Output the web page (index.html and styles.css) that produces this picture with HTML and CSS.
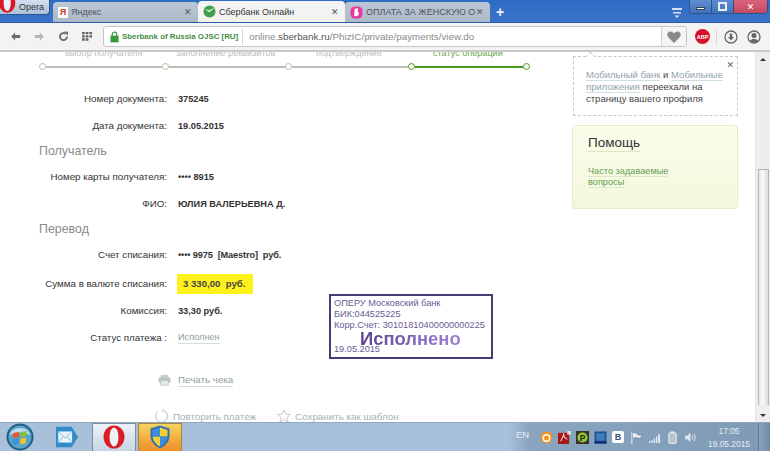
FILE: index.html
```html
<!DOCTYPE html>
<html lang="ru">
<head>
<meta charset="utf-8">
<title>Сбербанк Онлайн</title>
<link rel="stylesheet" href="styles.css">
</head>
<body>
<header class="tabbar">
  <div class="opera-btn">
    <svg class="opera-logo" viewBox="0 0 20 14"><ellipse cx="8" cy="3" rx="9" ry="11" fill="#d81a22"/><ellipse cx="8" cy="3" rx="4" ry="9" fill="#eef"/></svg>
    <span>Opera</span>
  </div>
  <div class="tab tab-off tab-ya">
    <span class="ya-icon">Я</span><span class="tab-title">Яндекс</span><span class="tab-x">✕</span>
  </div>
  <div class="tab tab-on">
    <svg class="fav" viewBox="0 0 14 14"><circle cx="7" cy="7" r="6.500" fill="#3f9f4a"/><path d="M2 4.500 L7 8 L13 2.500 L7 5.500 Z" fill="#c9e8c0"/></svg>
    <span class="tab-title">Сбербанк Онлайн</span><span class="tab-x">✕</span>
  </div>
  <div class="tab tab-off tab-last">
    <svg class="fav" viewBox="0 0 14 14"><rect x="0.500" y="0.500" width="13" height="13" rx="5" fill="#e8389c"/><path d="M5 3 L8 2.500 Q9.500 3 8 6 Q10.500 7 9 10 Q7 12 4.500 10.500 Z" fill="#fff"/></svg>
    <span class="tab-title">ОПЛАТА ЗА ЖЕНСКУЮ О</span><span class="tab-x">✕</span>
  </div>
  <span class="newtab">+</span>
  <svg class="tabmenu" viewBox="0 0 12 12"><path d="M1 1h10v2H1zM2 5h8v1.500H2zM3.500 8.500h5L6 11z" fill="#d5e2f4"/></svg>
  <div class="winbtns">
    <span class="wb"><i class="wb-min"></i></span>
    <span class="wb"><i class="wb-max"></i></span>
    <span class="wb wb-close">✕</span>
  </div>
</header>

<nav class="toolbar">
  <svg class="navico" viewBox="0 0 14 12"><path d="M6.500 1 L1.500 6 L6.500 11 V7.800 H13 V4.200 H6.500 Z" fill="#6d6d6d"/></svg>
  <svg class="navico" viewBox="0 0 14 12"><path d="M7.500 1 L12.500 6 L7.500 11 V7.800 H1 V4.200 H7.500 Z" fill="#b6b6b6"/></svg>
  <svg class="navico" viewBox="0 0 14 14"><path d="M11.500 7 A4.500 4.500 0 1 1 9.800 3.500" fill="none" stroke="#6d6d6d" stroke-width="2.400"/><path d="M8 0.500 L13 1 L12.500 6 Z" fill="#6d6d6d"/></svg>
  <svg class="navico grid-ico" viewBox="0 0 12 10"><path d="M0 0h3v2.500H0zM4 0h3v2.500H4zM8 0h3v2.500H8zM0 3.500h3v2.500H0zM4 3.500h3v2.500H4zM8 3.500h3v2.500H8zM0 7h3v2.500H0zM4 7h3v2.500H4z" fill="#666"/></svg>
  <div class="address">
    <svg class="lock" viewBox="0 0 10 12"><rect x="0.500" y="4.500" width="9" height="7.500" fill="#3a9a3e"/><path d="M2.500 5V3a2.500 2.500 0 0 1 5 0V5" fill="none" stroke="#3a9a3e" stroke-width="1.300"/></svg>
    <span class="cert">Sberbank of Russia OJSC [RU]</span>
    <span class="url"><span class="url-sub">online.</span><span class="url-dom">sberbank.ru</span><span class="url-sub">/PhizIC/private/payments/view.do</span></span>
    <span class="heart-box"><svg class="heart" viewBox="0 0 14 12"><path d="M7 12 L1 6 Q-1 2 2.500 0.500 Q5.500 0 7 2.500 Q8.500 0 11.500 0.500 Q15 2 13 6 Z" fill="#8a8a8a"/></svg></span>
  </div>
  <span class="abp">ABP</span>
  <span class="tool-sep"></span>
  <svg class="tool-ico" viewBox="0 0 14 14"><circle cx="7" cy="7" r="6" fill="none" stroke="#666" stroke-width="1.300"/><path d="M5.800 3.500h2.400V7h1.800L7 10.500 4 7h1.800z" fill="#666"/></svg>
  <svg class="tool-ico" viewBox="0 0 14 14"><circle cx="7" cy="7" r="6" fill="none" stroke="#666" stroke-width="1.300"/><circle cx="7" cy="5.500" r="2.500" fill="#666"/><path d="M2.800 11 Q7 6.500 11.200 11 Q7 14 2.800 11z" fill="#666"/></svg>
</nav>

<div class="viewport">
  <main class="page">
    <div class="content">
      <div class="steps">
        <div class="step-labels">
          <span class="sl sl-1">выбор получателя</span>
          <span class="sl sl-2">заполнение реквизитов</span>
          <span class="sl sl-3">подтверждение</span>
          <span class="sl sl-4">статус операции</span>
        </div>
        <div class="step-line">
          <i class="dot"></i><i class="seg"></i><i class="dot"></i><i class="seg"></i><i class="dot"></i><i class="seg"></i><i class="dot dot-on"></i><i class="seg seg-on"></i><i class="dot dot-on"></i>
        </div>
      </div>

      <div class="row row-first"><span class="label">Номер документа:</span><b class="val">375245</b></div>
      <div class="row"><span class="label">Дата документа:</span><b class="val">19.05.2015</b></div>
      <h2 class="sec">Получатель</h2>
      <div class="row"><span class="label">Номер карты получателя:</span><b class="val">•••• 8915</b></div>
      <div class="row"><span class="label">ФИО:</span><b class="val">ЮЛИЯ ВАЛЕРЬЕВНА Д.</b></div>
      <h2 class="sec">Перевод</h2>
      <div class="row"><span class="label">Счет списания:</span><b class="val val-acct">•••• 9975&nbsp; [Maestro]&nbsp; руб.</b></div>
      <div class="row row-sum"><span class="label">Сумма в валюте списания:</span><b class="val val-sum">3 330,00&nbsp; руб.</b></div>
      <div class="row"><span class="label">Комиссия:</span><b class="val">33,30 руб.</b></div>
      <div class="row"><span class="label">Статус платежа :</span><a class="val link">Исполнен</a></div>

      <div class="print">
        <svg class="print-ico" viewBox="0 0 14 12"><rect x="3" y="0.500" width="8" height="3" fill="#c4d0cf"/><rect x="0.500" y="3" width="13" height="6" rx="2" fill="#b5c4c3"/><rect x="3" y="6.500" width="8" height="5" fill="#e4ebea" stroke="#b5c4c3" stroke-width=".8"/></svg>
        <a class="link print-link">Печать чека</a>
      </div>
      <div class="actions">
        <span class="action act-repeat">
          <svg class="act-ico" viewBox="0 0 14 14"><path d="M8.500 1.500 A6 6 0 1 1 3 2.500" fill="none" stroke="#bdbdbd" stroke-width="1"/><path d="M6.500 0 L9 1.500 L7 3" fill="none" stroke="#bdbdbd" stroke-width=".8"/></svg>
          <span>Повторить платеж</span>
        </span>
        <span class="action">
          <svg class="act-ico" viewBox="0 0 14 14"><path d="M7 .8 L8.800 5.200 L13.500 5.500 L9.900 8.500 L11 13.200 L7 10.600 L3 13.200 L4.100 8.500 L.5 5.500 L5.200 5.200 Z" fill="none" stroke="#c4c4c4" stroke-width=".9"/></svg>
          <span>Сохранить как шаблон</span>
        </span>
      </div>

      <div class="stamp">
        <div>ОПЕРУ Московский банк</div>
        <div>БИК:044525225</div>
        <div>Корр.Счет: 30101810400000000225</div>
        <div class="stamp-big"><span>Исполнено</span></div>
        <div class="stamp-date">19.05.2015</div>
      </div>
    </div>

    <aside class="side">
      <div class="notice">
        <span class="notice-x">✕</span>
        <a class="nlink">Мобильный банк</a> и <a class="nlink">Мобильные приложения</a> переехали на страницу вашего профиля
      </div>
      <div class="help">
        <div class="help-title"><span>Помощь</span></div>
        <a class="help-link"><span>Часто задаваемые</span><br><span>вопросы</span></a>
      </div>
    </aside>
  </main>
  <div class="scrollbar">
    <span class="sb-up"></span>
    <span class="sb-thumb"></span>
    <span class="sb-down"></span>
  </div>
</div>

<footer class="taskbar">
  <div class="orb">
    <svg viewBox="0 0 28 28"><circle cx="14" cy="14" r="13.500" fill="#1f5f86"/><circle cx="14" cy="14" r="11.500" fill="#5aa3c8"/><path d="M3.500 12 A11 10 0 0 1 24.500 12 Q14 7 3.500 12Z" fill="#bcdcec"/><path d="M7 10 L13 9 L13 14 L7 15Z" fill="#e8562a"/><path d="M14.500 9 L21 8 L20 13.500 L14.500 14Z" fill="#8ac43f"/><path d="M7 16 L13 15.500 L12.500 21 L6.500 21.500Z" fill="#3b92d8"/><path d="M14.500 15.500 L20 15 L19.500 20.500 L14 21Z" fill="#f5c52e"/></svg>
  </div>
  <div class="task task-mail">
    <svg viewBox="0 0 26 24"><path d="M1 1H18L25 12L18 23H1Z" fill="#2f8cc8"/><rect x="3.500" y="6" width="15" height="12" fill="#eaf4fb"/><path d="M3.500 6 L11 13 L18.500 6 M3.500 18 L9 11.500 M18.500 18 L13 11.500" fill="none" stroke="#7db8de" stroke-width="1"/></svg>
  </div>
  <div class="task task-opera">
    <svg viewBox="0 0 22 24"><ellipse cx="11" cy="12" rx="10.500" ry="11.500" fill="#d81d24"/><ellipse cx="11" cy="12" rx="4.500" ry="9.500" fill="#eef1f5"/></svg>
  </div>
  <div class="task task-shield">
    <svg viewBox="0 0 20 24"><path d="M10 .5 L19.500 3.500 V12 Q19 19 10 23.500 Q1 19 .5 12 V3.500Z" fill="#2f6fb5"/><path d="M10 2.500 L17.500 5 V11.500 H10Z" fill="#f6cf39"/><path d="M10 11.500 H2.500 Q3.500 18 10 21.500Z" fill="#f6cf39"/><path d="M10 2.500 L2.500 5 V11.500 H10Z" fill="#3f8fd8"/><path d="M10 11.500 H17.500 Q16.500 18 10 21.500Z" fill="#3f8fd8"/></svg>
  </div>
  <div class="tray">
    <span class="lang">EN</span>
    <svg class="tray-ico" viewBox="0 0 14 14"><circle cx="7" cy="7" r="6.500" fill="#f09320"/><circle cx="7" cy="7.500" r="3.500" fill="none" stroke="#fff" stroke-width="1.600"/></svg>
    <svg class="tray-ico" viewBox="0 0 14 14"><rect y="2" width="12" height="12" fill="#a81818"/><path d="M3 11 Q7 3 6 3 Q5 7 10 9" fill="none" stroke="#fff" stroke-width="1"/><rect x="10" y="0" width="4" height="4" fill="#f3d9c9"/></svg>
    <svg class="tray-ico" viewBox="0 0 14 14"><rect width="14" height="14" fill="#3b3326"/><circle cx="7" cy="7" r="5.500" fill="#8fc832"/><text x="7" y="10.500" font-size="9" font-weight="700" text-anchor="middle" fill="#222" font-family="Liberation Sans">P</text></svg>
    <svg class="tray-ico" viewBox="0 0 14 14"><rect x=".5" y=".5" width="13" height="13" fill="#20558f"/><rect x="2.500" y="2.500" width="9" height="8" fill="#3f7dbe"/><rect x=".5" y="11" width="13" height="2.500" fill="#0e2c7c"/></svg>
    <span class="tray-vk">В</span>
    <svg class="tray-ico" viewBox="0 0 14 14"><path d="M2 1V14" stroke="#e8eef4" stroke-width="1.200"/><path d="M2.500 1.500 L8 2.500 L8 4 L13 4.500 L11 8 L6 7 L2.500 8Z" fill="#e8eef4" stroke="#51657a" stroke-width=".5"/></svg>
    <svg class="tray-ico" viewBox="0 0 14 14"><path d="M1 11h1.500v2H1zM3.500 10H5v3H3.500zM6 8h1.500v5H6zM8.500 6H10v7H8.500zM11 3.500h2V13h-2z" fill="#e4ebf2"/></svg>
    <svg class="tray-ico" viewBox="0 0 14 14"><rect x="3" y="2" width="8" height="11.500" rx="1.500" fill="#b8c4cf" stroke="#f0f4f8" stroke-width="1"/><rect x="5" y=".5" width="4" height="1.500" fill="#f0f4f8"/></svg>
    <svg class="tray-ico" viewBox="0 0 14 14"><path d="M1 5h2.500L7 2v10L3.500 9H1z" fill="#dfe6ee"/><path d="M9 4.500 Q10.500 7 9 9.500 M11 3 Q13.500 7 11 11" fill="none" stroke="#dfe6ee" stroke-width="1"/></svg>
    <div class="clock"><div>17:05</div><div>19.05.2015</div></div>
    <span class="showdesk"></span>
  </div>
</footer>
</body>
</html>
```
FILE: styles.css
```css
* { box-sizing: border-box; }
html, body { margin: 0; height: 100%; }
body {
  width: 770px; height: 451px; overflow: hidden;
  display: flex; flex-direction: column;
  font-family: "Liberation Sans", Arial, sans-serif;
  background: #fff; color: #333;
}
a { cursor: pointer; }

/* tab strip */
.tabbar {
  height: 23px; flex: none; display: flex; align-items: flex-end;
  background: linear-gradient(#2f6cc4, #3a74c8);
  border-bottom: 1px solid #2a5ca8;
  position: relative;
}
.opera-btn {
  position: absolute; left: 0; top: 0; width: 50px; height: 15px;
  background: linear-gradient(#d3dff0, #aebfd8);
  border: 1px solid #2c5490; border-top: 0; border-left: 0;
  border-radius: 0 0 4px 0; overflow: hidden;
  font-size: 9px; color: #333;
  display: flex; align-items: center; padding-left: 19px;
}
.opera-logo { position: absolute; left: 0; top: 0; width: 18px; height: 13px; }
.tab {
  height: 20px; display: flex; align-items: center; font-size: 9px;
  border-radius: 4px 4px 0 0; padding-left: 5px; flex: none;
}
.tab-off { background: linear-gradient(#bcc7d6, #aeb9c8); color: #4a5360; }
.tab-ya { margin-left: 53px; width: 145px; }
.tab-on { background: #f3f3f3; color: #333; width: 147px; height: 21px; }
.tab-last { width: 145px; }
.tab-title { flex: 1; white-space: nowrap; overflow: hidden; padding-left: 3px; }
.tab-x { width: 14px; font-size: 9px; color: #555; flex: none; font-weight: 700; font-family: "DejaVu Sans", sans-serif; }
.fav { width: 13px; height: 13px; flex: none; }
.ya-icon {
  width: 10px; height: 11px; background: #fff; color: #d8332a; flex: none;
  font-size: 9px; font-weight: 700; text-align: center; line-height: 11px; border-radius: 1px;
}
.newtab { color: #e8f0fb; font-size: 14px; font-weight: 700; margin-left: 6px; width: 14px; align-self: center; line-height: 14px; padding-top: 2px; }
.tabmenu { position: absolute; left: 671px; top: 7px; width: 12px; height: 12px; }
.winbtns {
  position: absolute; right: 2px; top: 0; height: 14px; display: flex;
  border: 1px solid #2a5490; border-top: 0; border-radius: 0 0 4px 4px; overflow: hidden;
}
.wb {
  width: 22px; background: linear-gradient(#5e8dd0, #4472b8); display: flex;
  align-items: center; justify-content: center; border-right: 1px solid #2a5490;
}
.wb-min { width: 9px; height: 3px; background: #fff; display: block; border: 1px solid #345; margin-top: 3px; }
.wb-max { width: 9px; height: 9px; border: 2px solid #e8eef8; display: block; }
.wb-close {
  width: 33px; background: linear-gradient(#d9637a, #c44a62); color: #fff;
  font-size: 9px; font-weight: 700; border: 0; font-family: "DejaVu Sans", sans-serif;
}

/* address toolbar */
.toolbar {
  height: 29px; flex: none; background: #f3f3f3;
  border-bottom: 2px solid #c9c9c9;
  display: flex; align-items: center; padding-left: 10px;
}
.navico { width: 11px; height: 11px; flex: none; margin-right: 13px; }
.grid-ico { margin-right: 10px; }
.address {
  width: 584px; height: 21px; background: #fff; border: 1px solid #c6c6c6; border-radius: 3px;
  display: flex; align-items: center; padding-left: 6px; position: relative; flex: none;
}
.lock { width: 9px; height: 12px; flex: none; }
.cert {
  color: #3f8f45; font-size: 7.900px; font-weight: 700; padding: 0 4px 0 3px; white-space: nowrap;
  border-right: 1px solid #d8d8d8; line-height: 16px;
}
.url { font-size: 9.800px; padding-left: 6px; white-space: nowrap; color: #8a8a8a; }
.url-dom { color: #555; }
.heart-box {
  position: absolute; right: 0; top: 0; bottom: 0; width: 25px; border-left: 1px solid #d5d5d5;
  background: #f5f5f5; display: flex; align-items: center; justify-content: center; border-radius: 0 3px 3px 0;
}
.heart { width: 14px; height: 12px; }
.abp {
  width: 15px; height: 15px; border-radius: 50%; background: #d6102a; color: #fff; font-size: 5.500px; font-weight: 700;
  display: flex; align-items: center; justify-content: center; margin-left: 8px; flex: none;
}
.tool-sep { width: 1px; height: 15px; background: #d5d5d5; margin: 0 7px 0 6px; flex: none; }
.tool-ico { width: 14px; height: 14px; margin-right: 9px; flex: none; }

/* viewport */
.viewport { height: 370px; flex: none; display: flex; overflow: hidden; }
.page { flex: 1; display: flex; min-width: 0; overflow: hidden; }
.content { width: 573px; flex: none; position: relative; }
.side { flex: 1; padding-top: 4px; }
.scrollbar {
  width: 15px; flex: none; background: #eeeeee; position: relative;
  display: flex; flex-direction: column; align-items: center; border-left: 1px solid #e4e4e4;
}
.sb-up, .sb-down { width: 0; height: 0; border: 3px solid transparent; flex: none; }
.sb-up { border-bottom-color: #333; margin-top: 3px; }
.sb-thumb { flex: 1; width: 11px; margin: 108px 0 0; background: linear-gradient(90deg,#e6e6e6,#fbfbfb 40%,#dcdcdc); border: 1px solid #b5b5b5; border-bottom: 0; }
.sb-down { border-top-color: #333; margin: 9px 0 2px; }

/* steps */
.steps { height: 18px; position: relative; }
.step-labels { height: 7px; overflow: hidden; position: relative; }
.sl {
  position: absolute; bottom: 0; font-size: 9.100px; line-height: 11px; color: #bdbdbd; white-space: nowrap;
}
.sl-1 { left: 65px; }
.sl-2 { left: 176px; }
.sl-3 { left: 316px; }
.sl-4 { left: 433px; color: #66a845; }
.step-line { display: flex; align-items: center; padding: 4px 0 0 39px; }
.dot { width: 7px; height: 7px; border-radius: 50%; background: #fff; border: 1.500px solid #bdbdae; flex: none; }
.dot-on { border-color: #4a9a1e; }
.seg { height: 2px; background: #bdbdb5; width: 116px; flex: none; }
.seg-on { background: #4a9a1e; width: 108px; }

/* rows */
.row { height: 27px; display: flex; align-items: center; font-size: 9.750px; }
.row-first { margin-top: 15px; }
.label { width: 167px; text-align: right; flex: none; color: #333; }
.val { margin-left: 11px; color: #333; font-weight: 700; font-size: 9.200px; white-space: nowrap; }
.val-acct { letter-spacing: -.12px; }
.val-sum {
  background: #fff11c; padding: 0 6px; height: 20px; line-height: 20px; font-size: 9.600px; color: #444;
  width: 76px; margin-left: 10px;
}
.row-sum { margin-top: 2px; }
.link { color: #8fa0a0; font-weight: 400; font-size: 9.200px; border-bottom: 1px solid #cfdede; line-height: 12px; }
.print-link { font-size: 9.800px; }
.sec { margin: 0; font-size: 12.400px; font-weight: 400; color: #8a8a8a; padding-left: 39px; height: 24px; line-height: 24px; }

.print { display: flex; align-items: center; margin-left: 158px; margin-top: 20px; height: 18px; }
.print-ico { width: 13px; height: 12px; margin-right: 7px; flex: none; }
.actions { display: flex; margin-left: 155px; margin-top: 17px; height: 20px; }
.action { display: flex; align-items: center; font-size: 9.800px; color: #a4b2b2; white-space: nowrap; gap: 4px; }
.act-repeat { margin-right: 21px; }
.act-ico { width: 14px; height: 14px; flex: none; }

/* stamp */
.stamp {
  position: absolute; left: 329px; top: 242px; width: 164px; height: 65px;
  border: 2px solid #4b3a76; background: #fff; padding: 2px 0 0 3px;
  font-size: 9.200px; line-height: 11px; color: #6a5a94; white-space: nowrap;
}
.stamp-big { font-size: 18.400px; font-weight: 700; line-height: 15px; margin-left: 26px; height: 13px; }
.stamp-big span {
  background: linear-gradient(90deg, #5b4190, #a184d8); -webkit-background-clip: text; background-clip: text; color: transparent;
}
.stamp-date { line-height: 10px; }

/* sidebar */
.notice {
  width: 165px; height: 60px; border: 1px dashed #c8c8c8; padding: 12px 8px 0 12px;
  font-size: 9.500px; line-height: 12px; color: #444; position: relative;
}
.notice::before {
  content: ""; position: absolute; left: 13px; top: -4px; width: 6px; height: 6px; background: #fff;
  border-left: 1px dashed #ccc; border-top: 1px dashed #ccc; transform: rotate(45deg);
}
.nlink { color: #90a4a8; border-bottom: 1px solid #cfdede; }
.notice-x { position: absolute; right: 3px; top: 2px; font-size: 9px; color: #666; font-family: "DejaVu Sans", sans-serif; }
.help {
  width: 166px; height: 84px; margin-top: 9px; margin-left: -1px;
  background: linear-gradient(#fbfdeb, #f3f8dc); border: 1px solid #e6ebcd; border-radius: 3px;
  padding: 8px 15px;
}
.help-title { font-size: 13.500px; color: #333; line-height: 18px; }
.help-title span { border-bottom: 1px solid #dfe6c8; padding-bottom: 1px; }
.help-link { display: block; margin-top: 14px; font-size: 9.200px; line-height: 11px; color: #5f9e55; }
.help-link span { border-bottom: 1px solid #dde8c8; }

/* windows taskbar */
.taskbar {
  height: 29px; flex: none; background: #a9c0da; border-top: 1px solid #92a8bd;
  display: flex; align-items: center; position: relative;
}
.orb { width: 28px; height: 28px; margin-left: 6px; flex: none; }
.orb svg, .task svg { display: block; }
.orb svg { width: 28px; height: 28px; }
.task { height: 29px; flex: none; display: flex; align-items: center; justify-content: center; }
.task-mail { width: 26px; margin-left: 20px; }
.task-mail svg { width: 24px; height: 24px; }
.task-opera { width: 44px; margin-left: 12px; background: linear-gradient(#edf2f8, #c6d5e6); border: 1px solid #7f8e9e; }
.task-opera svg { width: 22px; height: 24px; }
.task-shield { width: 44px; margin-left: 2px; background: linear-gradient(#f5d45e, #ee8f2a); border: 1px solid #a8843c; }
.task-shield svg { width: 20px; height: 24px; }
.tray {
  margin-left: auto; height: 28px; width: 262px; display: flex; align-items: center; padding-left: 8px;
  background: linear-gradient(90deg, #a9c0da, #8aa5c0 8%, #7f9ab5);
  position: relative; color: #e6edf4;
}
.lang { font-size: 9.500px; width: 24px; flex: none; margin-bottom: 6px; }
.tray-ico { width: 13px; height: 13px; margin-right: 5px; flex: none; }
.tray-vk {
  width: 12px; height: 12px; background: #fff; color: #31537c; font-size: 9px; font-weight: 700; text-align: center;
  line-height: 12px; border-radius: 2px; margin-right: 6px; flex: none;
}
.clock { position: absolute; right: 16px; top: 2px; text-align: center; font-size: 8.400px; line-height: 13px; width: 50px; }
.showdesk { position: absolute; right: 0; top: 0; bottom: 0; width: 12px; background: linear-gradient(90deg,#8ea3b8,#6f8aa5); border-left: 1px solid #5f7890; }
```
